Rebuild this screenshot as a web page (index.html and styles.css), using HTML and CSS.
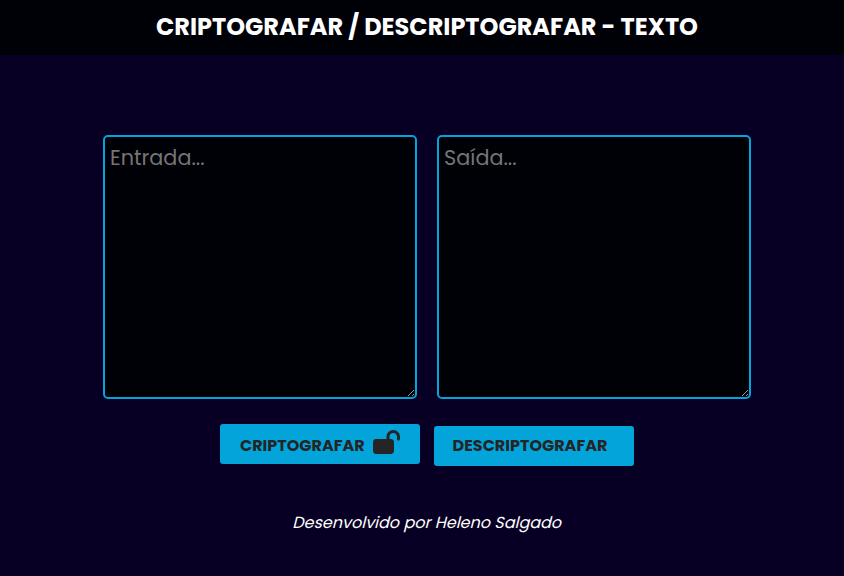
FILE: index.html
```html
<!DOCTYPE html>
<html lang="pt-br">
<head>
<meta charset="UTF-8">
<title>Criptografar / Descriptografar</title>
<link rel="stylesheet" href="styles.css">
</head>
<body>
<header class="header"><h1 class="title">CRIPTOGRAFAR / DESCRIPTOGRAFAR - TEXTO</h1></header>
<main class="main">
  <div class="fields">
    <textarea class="field" placeholder="Entrada..."></textarea>
    <textarea class="field field-out" placeholder="Saída..."></textarea>
  </div>
  <div class="actions">
    <button class="button"><span class="encrypt">CRIPTOGRAFAR</span>
      <svg class="lock" viewBox="0 0 576 512"><path d="M352 144c0-44.2 35.8-80 80-80s80 35.800 80 80v48c0 17.700 14.300 32 32 32s32-14.300 32-32V144C576 64.500 511.500 0 432 0S288 64.500 288 144v48H64c-35.300 0-64 28.700-64 64V448c0 35.300 28.700 64 64 64H384c35.300 0 64-28.700 64-64V256c0-35.300-28.700-64-64-64H352V144z"/></svg>
    </button>
    <button class="button button-decrypt"><span class="decrypt">DESCRIPTOGRAFAR</span></button>
  </div>
</main>
<footer class="footer"><span class="credit">Desenvolvido por Heleno Salgado</span></footer>
</body>
</html>
```
FILE: styles.css
```css
* { box-sizing: border-box; margin: 0; padding: 0; }
body {
  height: 576px;
  overflow: hidden;
  background: #080024;
  font-family: Poppins, Inter, sans-serif;
}
.header { height: 55px; padding: 9px 0 0 156px; background: #000007; }
.title { font-size: 24px; line-height: 36px; font-weight: 700; color: #fff; white-space: nowrap; }
.main { padding-top: 80px; }
.fields { display: flex; gap: 20px; padding-left: 103px; }
.field {
  width: 314px;
  height: 264px;
  padding: 5px;
  border: 2px solid #02a4da;
  border-radius: 5px;
  background: #000007;
  color: #fff;
  font: 20.8px/32px Poppins, Inter, sans-serif;
}
.field::placeholder { color: #757575; }
.actions { display: flex; gap: 14px; padding: 25px 0 0 220px; }
.button {
  display: flex;
  width: 200px;
  height: 40px;
  padding: 6px 0 0 20px;
  border: 0;
  border-radius: 3px;
  background: #02a4da;
  color: #252525;
  font: 700 16px/31px Poppins, Inter, sans-serif;
  text-align: left;
  white-space: nowrap;
}
.encrypt { width: 133px; }
.lock { width: 27px; height: 24px; fill: #252525; flex: none; }
.button-decrypt { margin-top: 2px; padding: 4px 0 0 18.5px; }
.footer { padding: 45px 0 0 292px; color: #fff; font-size: 16px; line-height: 24px; }
.credit { display: inline-block; transform: skewX(-14deg); transform-origin: 0 18px; }
```
